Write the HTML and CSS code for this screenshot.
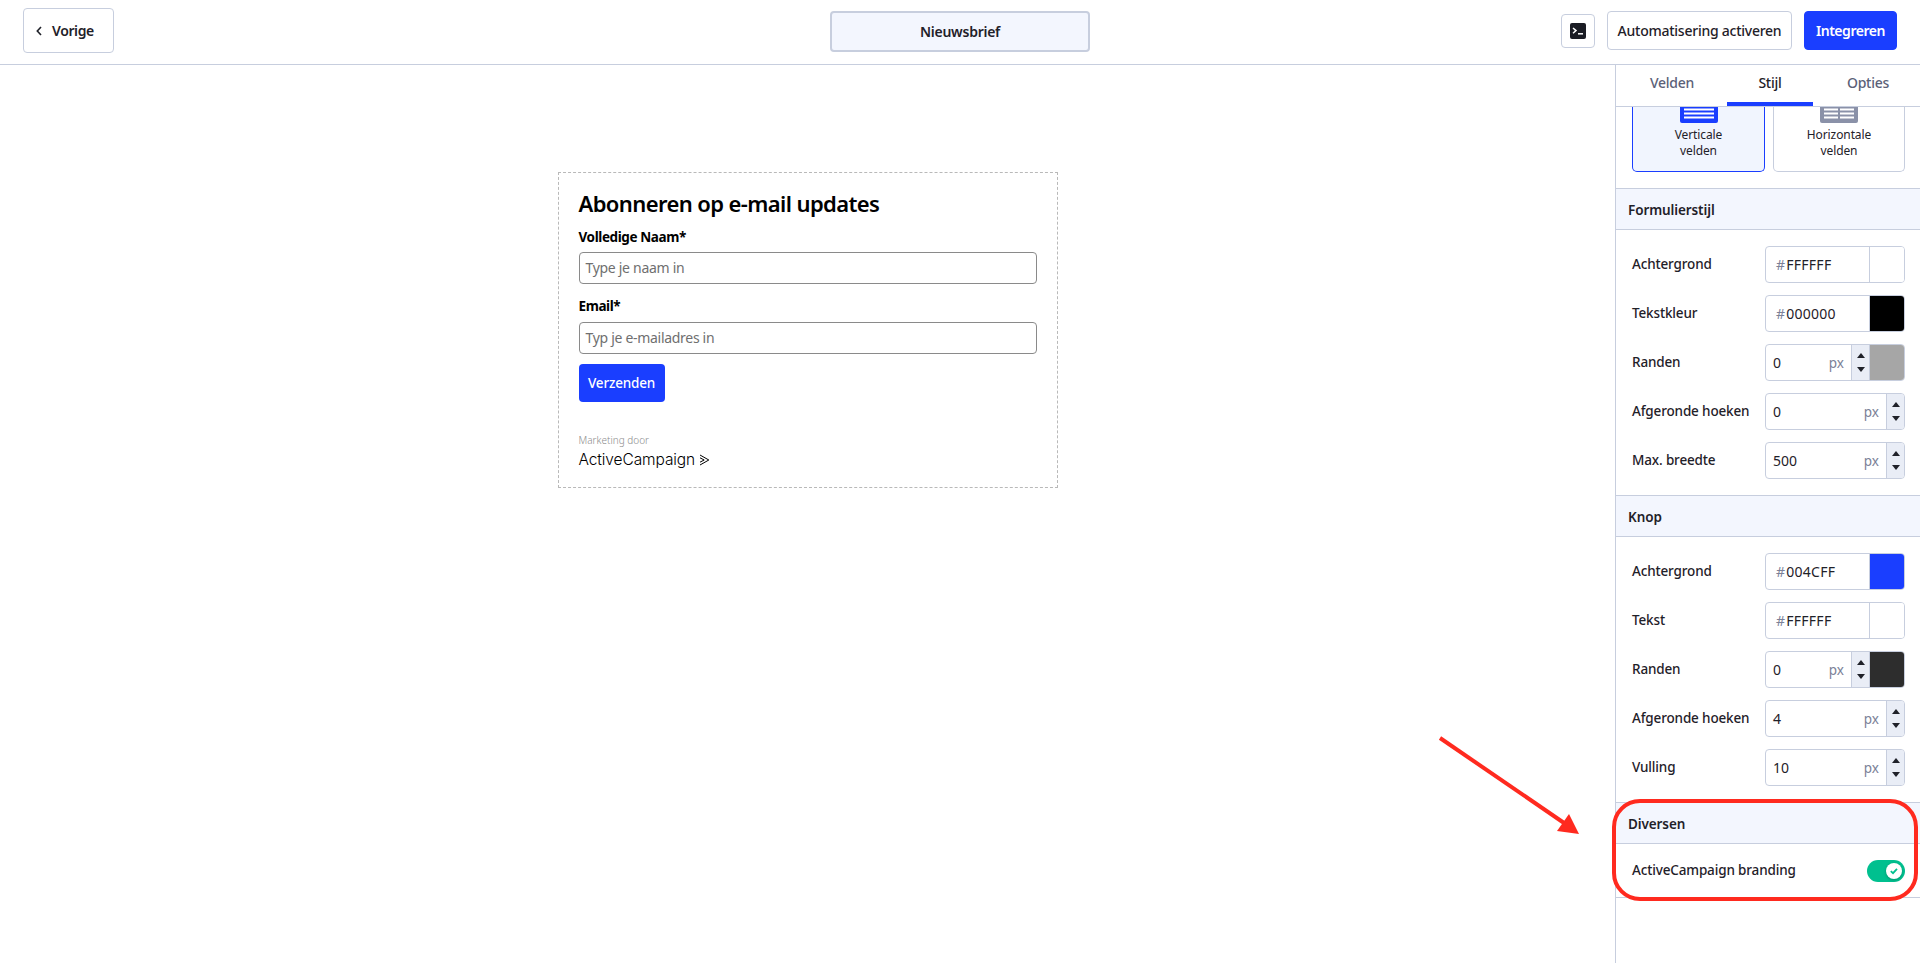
FILE: index.html
```html
<!DOCTYPE html>
<html lang="nl">
<head>
<meta charset="utf-8">
<title>Nieuwsbrief</title>
<link rel="stylesheet" href="styles.css">
</head>
<body>
<header class="topbar">
  <div class="topbar-left">
    <button class="btn btn-back">
      <svg class="chev" width="6" height="10" viewBox="0 0 6 10"><path d="M5 1 1.3 5 5 9" fill="none" stroke="#1f2129" stroke-width="1.6"/></svg>
      <span>Vorige</span>
    </button>
  </div>
  <div class="form-name">Nieuwsbrief</div>
  <div class="topbar-right">
    <button class="btn btn-term">
      <svg width="16" height="16" viewBox="0 0 16 16"><rect width="16" height="16" rx="2" fill="#1a1c24"/><path d="M3 5l3 2.6L3 10.2" fill="none" stroke="#fff" stroke-width="1.5"/><path d="M8 10.8h5" stroke="#fff" stroke-width="1.5"/></svg>
    </button>
    <button class="btn btn-auto">Automatisering activeren</button>
    <button class="btn btn-primary">Integreren</button>
  </div>
</header>

<main class="workspace">
  <section class="canvas">
    <form class="signup">
      <h1 class="signup-title">Abonneren op e-mail updates</h1>
      <div class="signup-label">Volledige Naam*</div>
      <div class="signup-input">Type je naam in</div>
      <div class="signup-label signup-label-second">Email*</div>
      <div class="signup-input">Typ je e-mailadres in</div>
      <div class="signup-submit">Verzenden</div>
      <div class="brand">
        <div class="brand-by">Marketing door</div>
        <div class="brand-logo">ActiveCampaign
          <svg width="11" height="12" viewBox="0 0 11 12"><path d="M1 1 9.8 6 1 11M1 3.8 5.2 6 1 8.2" fill="none" stroke="#000" stroke-width="1"/></svg>
        </div>
      </div>
    </form>
  </section>

  <aside class="panel">
    <nav class="tabs">
      <div class="tab">Velden</div>
      <div class="tab tab-active">Stijl</div>
      <div class="tab">Opties</div>
    </nav>

    <div class="layout-cards">
      <div class="layout-card layout-card-on">
        <svg width="38" height="16" viewBox="0 0 38 16"><path d="M0 0h38v14a2 2 0 0 1-2 2H2a2 2 0 0 1-2-2z" fill="#1a3eff"/><path d="M4 2.5h30M4 6.5h30M4 10.5h30" stroke="#fff" stroke-width="2"/></svg>
        <span>Verticale<br>velden</span>
      </div>
      <div class="layout-card">
        <svg width="38" height="16" viewBox="0 0 38 16"><path d="M0 0h38v14a2 2 0 0 1-2 2H2a2 2 0 0 1-2-2z" fill="#8a91a8"/><path d="M4 2.5h14M20 2.5h14M4 6.5h14M20 6.5h14M4 10.5h14M20 10.5h14" stroke="#fff" stroke-width="2"/></svg>
        <span>Horizontale<br>velden</span>
      </div>
    </div>

    <div class="section-head section-head-first">Formulierstijl</div>
    <div class="fields">
      <div class="field"><label>Achtergrond</label>
        <div class="control"><span class="hex"><i>#</i>FFFFFF</span><span class="swatch swatch-white"></span></div></div>
      <div class="field"><label>Tekstkleur</label>
        <div class="control"><span class="hex"><i>#</i>000000</span><span class="swatch swatch-black"></span></div></div>
      <div class="field"><label>Randen</label>
        <div class="control"><span class="num">0</span><span class="unit">px</span><span class="spin"><b class="up"></b><b class="down"></b></span><span class="swatch swatch-grey"></span></div></div>
      <div class="field"><label>Afgeronde hoeken</label>
        <div class="control"><span class="num">0</span><span class="unit">px</span><span class="spin"><b class="up"></b><b class="down"></b></span></div></div>
      <div class="field"><label>Max. breedte</label>
        <div class="control"><span class="num">500</span><span class="unit">px</span><span class="spin"><b class="up"></b><b class="down"></b></span></div></div>
    </div>

    <div class="section-head">Knop</div>
    <div class="fields">
      <div class="field"><label>Achtergrond</label>
        <div class="control"><span class="hex"><i>#</i>004CFF</span><span class="swatch swatch-blue"></span></div></div>
      <div class="field"><label>Tekst</label>
        <div class="control"><span class="hex"><i>#</i>FFFFFF</span><span class="swatch swatch-white"></span></div></div>
      <div class="field"><label>Randen</label>
        <div class="control"><span class="num">0</span><span class="unit">px</span><span class="spin"><b class="up"></b><b class="down"></b></span><span class="swatch swatch-dark"></span></div></div>
      <div class="field"><label>Afgeronde hoeken</label>
        <div class="control"><span class="num">4</span><span class="unit">px</span><span class="spin"><b class="up"></b><b class="down"></b></span></div></div>
      <div class="field"><label>Vulling</label>
        <div class="control"><span class="num">10</span><span class="unit">px</span><span class="spin"><b class="up"></b><b class="down"></b></span></div></div>
    </div>

    <div class="section-head">Diversen</div>
    <div class="toggle-row">
      <label>ActiveCampaign branding</label>
      <span class="toggle"><span class="knob"><svg width="10" height="10" viewBox="0 0 10 10"><path d="M1.8 5.2 4 7.2 8 2.8" fill="none" stroke="#00c08f" stroke-width="1.8"/></svg></span></span>
    </div>
  </aside>
</main>

<svg class="annotation" width="1920" height="963" viewBox="0 0 1920 963">
  <rect x="1614" y="801" width="302" height="98" rx="26" fill="none" stroke="#ff2a1f" stroke-width="4"/>
  <path d="M1440 738 1567 825" stroke="#ff2a1f" stroke-width="4" fill="none"/>
  <path d="M1579 834 1557 831 1569 814z" fill="#ff2a1f"/>
</svg>
</body>
</html>
```
FILE: styles.css
```css
* { box-sizing: border-box; }
html, body { margin: 0; height: 963px; overflow: hidden; }
body {
  position: relative;
  background: #fff;
  color: #1f2129;
  font-family: "Noto Sans", "Liberation Sans", sans-serif;
  font-size: 14px;
}
button { font: inherit; color: inherit; background: #fff; padding: 0; cursor: pointer; }

.topbar {
  height: 65px;
  display: grid;
  grid-template-columns: 1fr 260px 1fr;
  align-items: center;
  padding: 0 23px 3px;
  border-bottom: 1px solid #c7cede;
}
.topbar-right { display: flex; justify-content: flex-end; align-items: center; gap: 12px; }
.btn { border: 1px solid #c7cede; border-radius: 4px; font-weight: 600; letter-spacing: -.2px; }
.btn-back { width: 91px; height: 45px; display: flex; align-items: center; gap: 10px; padding-left: 12px; letter-spacing: -.4px; }
.btn-term { width: 34px; height: 34px; display: flex; align-items: center; justify-content: center; }
.btn-auto { width: 185px; height: 39px; font-weight: 500; letter-spacing: -.25px; }
.btn-primary { width: 93px; height: 39px; background: #1a3eff; border-color: #1a3eff; color: #fff; letter-spacing: -.45px; }
.form-name {
  height: 41px;
  margin-top: 2px;
  display: flex; align-items: center; justify-content: center;
  background: #f3f6fe;
  border: 2px solid #c7cede;
  border-radius: 4px;
  font-weight: 600;
  letter-spacing: -.25px;
}

.workspace { display: flex; height: 898px; }
.canvas { flex: 1; padding-top: 107px; }
.signup {
  width: 500px;
  height: 316px;
  margin: 0 auto;
  padding: 16px 20px 0;
  border: 1px dashed #b9b9b9;
  color: #000;
}
.signup-title { margin: 0; font-size: 22px; line-height: 28px; font-weight: 600; letter-spacing: -.6px; }
.signup-label { margin-top: 8px; font-size: 13.5px; line-height: 24px; font-weight: 700; letter-spacing: -.4px; }
.signup-label-second { margin-top: 10px; }
.signup-input {
  margin-top: 3px;
  height: 32px;
  padding: 0 6px;
  border: 1px solid #8a8a8a;
  border-radius: 4px;
  color: #6f6f6f;
  line-height: 30px;
  letter-spacing: -.3px;
}
.signup-label-second + .signup-input { margin-top: 4px; }
.signup-submit {
  width: 86px; height: 38px; margin-top: 10px;
  background: #1a3eff; color: #fff; border-radius: 4px;
  display: flex; align-items: center; justify-content: center;
  font-size: 13.5px;
  font-weight: 500; letter-spacing: -.2px;
}
.brand { margin-top: 31px; }
.brand-by { font-size: 10px; line-height: 14px; color: #8c8c8c; font-weight: 300; }
.brand-logo {
  margin-top: 4px;
  display: flex; align-items: center; gap: 4px;
  font-family: "Inter", sans-serif; font-size: 15.5px; line-height: 18px; font-weight: 300; letter-spacing: -.1px;
  color: #000;
}

.panel {
  width: 305px;
  height: 100%;
  border-left: 1px solid #c7cede;
  overflow: hidden;
}
.tabs {
  height: 42px;
  display: flex;
  gap: 12px;
  padding-left: 13px;
  border-bottom: 1px solid #c7cede;
}
.tab {
  width: 86px; height: 41px;
  display: flex; align-items: center; justify-content: center;
  padding-bottom: 2px;
  color: #5b6178;
  font-weight: 500;
  letter-spacing: -.25px;
  border-bottom: 4px solid transparent;
}
.tab-active { color: #1f2129; border-bottom-color: #1a3eff; }

.layout-cards { display: flex; gap: 8px; padding: 0 0 0 16px; height: 65px; }
.layout-card {
  width: 132px; height: 65px;
  border: 1px solid #c7cede; border-top: 0;
  border-radius: 0 0 5px 5px;
  display: flex; flex-direction: column; align-items: center;
  text-align: center;
  font-size: 12px; line-height: 16px;
  letter-spacing: -.1px;
}
.layout-card span { margin-top: 4px; }
.layout-card-on { width: 133px; background: #f1f5fe; border-color: #1a3eff; }

.section-head {
  height: 42px;
  padding: 1px 0 0 12px;
  display: flex; align-items: center;
  background: #f3f6fe;
  border-top: 1px solid #c7cede;
  border-bottom: 1px solid #c7cede;
  font-size: 13.5px;
  font-weight: 600;
  letter-spacing: -.1px;
}
.section-head-first { margin-top: 16px; }
.fields { display: flex; flex-direction: column; gap: 12px; padding: 16px 15px 16px 16px; }
.field { display: flex; align-items: center; justify-content: space-between; height: 37px; }
.field label, .toggle-row label { font-weight: 500; letter-spacing: -.15px; font-size: 13.5px; padding-bottom: 2px; }
.control {
  width: 140px; height: 37px;
  display: flex; align-items: center;
  border: 1px solid #c7cede;
  border-radius: 4px;
  overflow: hidden;
  font-size: 14px;
}
.hex { flex: 1; padding-left: 10px; letter-spacing: .25px; }
.hex i { font-style: normal; color: #7b8198; margin-right: 1px; }
.num { flex: 1; padding-left: 7px; }
.unit { color: #7b8198; margin-right: 7px; font-size: 13.5px; }
.spin {
  width: 18px; height: 100%;
  background: #e9edf6;
  border-left: 1px solid #c7cede;
  display: flex; flex-direction: column; align-items: center; justify-content: center; gap: 9px;
}
.up, .down { width: 0; height: 0; border-left: 4px solid transparent; border-right: 4px solid transparent; }
.up { border-bottom: 5px solid #1f2129; }
.down { border-top: 5px solid #1f2129; }
.swatch { width: 35px; height: 100%; flex: none; border-left: 1px solid #c7cede; }
.swatch-white { background: #fff; }
.swatch-black { background: #000; }
.swatch-grey { background: #a6a6a6; }
.swatch-blue { background: #1a3eff; }
.swatch-dark { background: #2d2d2d; }

.toggle-row {
  height: 54px;
  padding: 0 15px 0 16px;
  display: flex; align-items: center; justify-content: space-between;
  border-bottom: 1px solid #c7cede;
}
.toggle {
  width: 38px; height: 22px;
  border-radius: 11px;
  background: #00c08f;
  display: flex; align-items: center; justify-content: flex-end;
  padding-right: 3px;
}
.knob {
  width: 16px; height: 16px;
  border-radius: 50%;
  background: #fff;
  display: flex; align-items: center; justify-content: center;
  box-shadow: 0 1px 3px rgba(0,0,0,.25);
}

.annotation { position: absolute; left: 0; top: 0; pointer-events: none; }
```
